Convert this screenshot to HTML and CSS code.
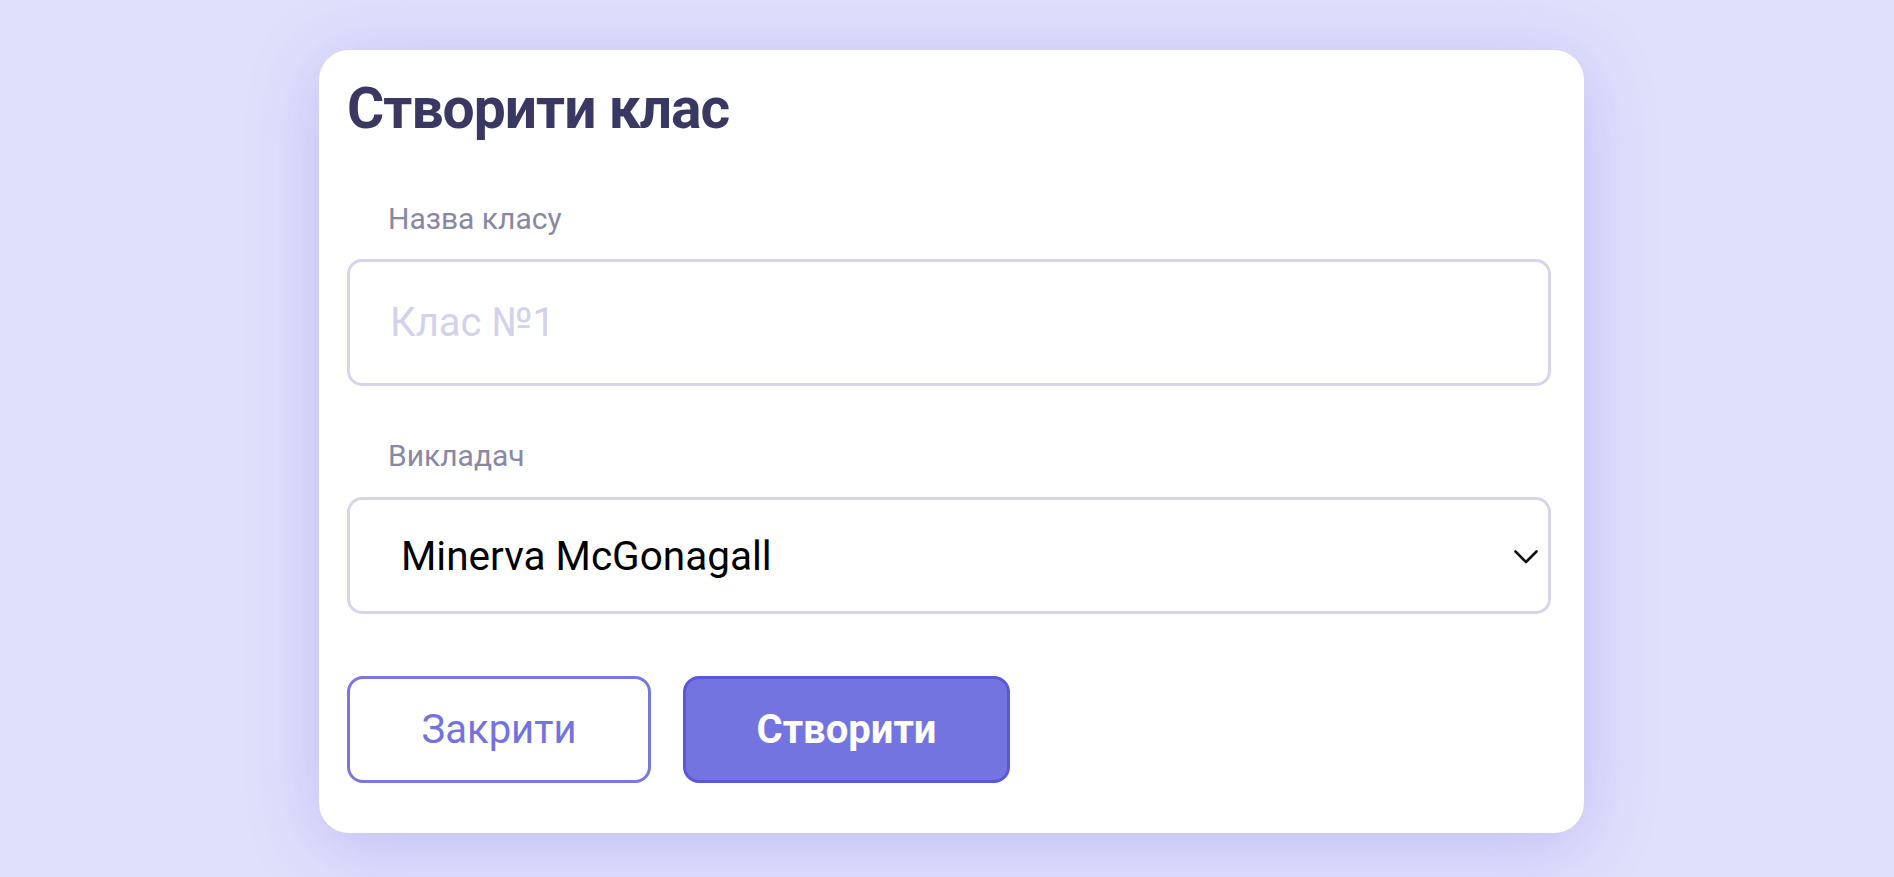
FILE: index.html
```html
<!DOCTYPE html>
<html lang="uk">
<head>
<meta charset="utf-8">
<title>Створити клас</title>
<link rel="stylesheet" href="styles.css">
</head>
<body>
<main class="page">
  <section class="card">
    <h1 class="title">Створити клас</h1>
    <div class="field">
      <label class="label" for="name">Назва класу</label>
      <input class="input" id="name" type="text" placeholder="Клас №1">
    </div>
    <div class="field field-second">
      <span class="label">Викладач</span>
      <div class="select">
        <span class="select-value">Minerva McGonagall</span>
        <svg class="chevron" width="24" height="14" viewBox="0 0 24 14" aria-hidden="true">
          <path d="M1.5 1.5 L12 12 L22.5 1.5" fill="none" stroke="#111" stroke-width="2.6" stroke-linecap="round" stroke-linejoin="round"/>
        </svg>
      </div>
    </div>
    <div class="actions">
      <button class="btn btn-outline" type="button">Закрити</button>
      <button class="btn btn-primary" type="button">Створити</button>
    </div>
  </section>
</main>
</body>
</html>
```
FILE: styles.css
```css
* {
  box-sizing: border-box;
}

html, body {
  margin: 0;
  padding: 0;
}

body {
  background: #e0e0fc;
  font-family: Roboto, "Noto Sans", "Liberation Sans", sans-serif;
  min-height: 877px;
}

.page {
  padding: 50px 0 0 319px;
}

.card {
  width: 1265px;
  background: #ffffff;
  border-radius: 30px;
  padding: 25px 33px 50px 28px;
  box-shadow: 0 12px 70px rgba(120, 118, 232, 0.32);
}

.title {
  margin: 0;
  font-size: 57px;
  line-height: 68px;
  font-weight: 700;
  letter-spacing: -1px;
  color: #383862;
}

.field {
  display: flex;
  flex-direction: column;
  gap: 24px;
  margin-top: 59px;
}

.field-second {
  margin-top: 53px;
  gap: 25px;
}

.label {
  display: block;
  padding-left: 41px;
  font-size: 30px;
  line-height: 33px;
  color: #8987a5;
}

.input {
  display: block;
  width: 100%;
  height: 127px;
  border: 3px solid #d6d5eb;
  border-radius: 15px;
  padding: 0 40px;
  font-family: Roboto, "Noto Sans", "Liberation Sans", sans-serif;
  font-size: 40px;
  line-height: 47px;
  color: #222;
  background: #fff;
  outline: none;
}

.input::placeholder {
  color: #d3d2ec;
  opacity: 1;
}

.select {
  display: flex;
  align-items: center;
  justify-content: space-between;
  height: 117px;
  border: 3px solid #d6d5eb;
  border-radius: 15px;
  padding: 0 10px 0 51px;
  background: #fff;
}

.select-value {
  font-family: Roboto, "Liberation Sans", sans-serif;
  font-size: 40.5px;
  line-height: 48px;
  color: #000;
}

.chevron {
  display: block;
  flex: none;
  margin-top: 2px;
}

.actions {
  display: flex;
  gap: 32px;
  margin-top: 62px;
}

.btn {
  height: 107px;
  border-radius: 16px;
  font-family: Roboto, "Noto Sans", "Liberation Sans", sans-serif;
  font-size: 40px;
  line-height: 46px;
  padding: 0;
  cursor: pointer;
}

.btn-outline {
  width: 304px;
  background: #ffffff;
  border: 3px solid #7876e1;
  color: #7472df;
  font-weight: 400;
}

.btn-primary {
  width: 327px;
  background: #7474e0;
  border: 3px solid #5957da;
  color: #ffffff;
  font-weight: 700;
}
```
